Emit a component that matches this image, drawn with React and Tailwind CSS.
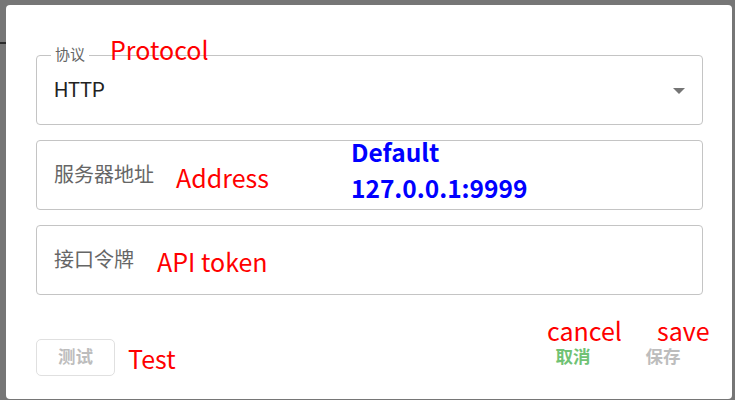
export default function App() {
  const ui = { fontFamily: 'Roboto, "Noto Sans CJK SC", sans-serif' };
  const ann = { fontFamily: '"Noto Sans CJK SC", sans-serif' };
  return (
    <div className="relative h-[400px] w-[735px] overflow-hidden bg-[#767676]" style={ui}>
      <div className="absolute left-0 top-[42px] h-[2px] w-[6px] bg-[#2a2a2a]" />
      <div className="relative ml-[6px] mt-[5px] flex h-[394px] w-[726px] flex-col rounded-[4px] bg-white px-[30px] pt-[50px]">
        {/* Protocol select */}
        <div className="relative flex h-[70px] w-[667px] items-center justify-between rounded-[4px] border border-[#c4c4c4] pl-[17px] pr-[17px]">
          <span className="absolute left-[14px] top-[-11px] bg-white px-[4px] text-[15px] leading-[20px] text-[#666]">协议</span>
          <span className="text-[20px] leading-none text-[#212121]">HTTP</span>
          <svg width="12" height="6" viewBox="0 0 12 6" className="mt-[1px]">
            <path d="M0 0 L12 0 L6 6 Z" fill="#757575" />
          </svg>
        </div>
        {/* Address */}
        <div className="mt-[15px] flex h-[70px] w-[667px] items-center rounded-[4px] border border-[#c4c4c4] pl-[17px]">
          <span className="text-[20px] leading-none text-[#666]">服务器地址</span>
        </div>
        {/* Token */}
        <div className="mt-[15px] flex h-[70px] w-[667px] items-center rounded-[4px] border border-[#c4c4c4] pl-[17px]">
          <span className="text-[20px] leading-none text-[#666]">接口令牌</span>
        </div>
        {/* Buttons */}
        <div className="mt-[44px] flex w-[667px] items-center justify-between">
          <button className="flex h-[37px] w-[79px] items-center justify-center rounded-[5px] border border-[#e0e0e0] text-[17.5px] font-bold text-[#bdbdbd]">测试</button>
          <div className="flex items-center gap-[10px]">
            <button className="flex h-[37px] w-[80px] items-center justify-center text-[17.5px] font-bold text-[#70c274]">取消</button>
            <button className="flex h-[37px] w-[80px] items-center justify-center text-[17.5px] font-bold text-[#bdbdbd]">保存</button>
          </div>
        </div>
      </div>

      {/* Annotations */}
      <div className="absolute left-[110px] top-[37px] text-[25px] leading-none text-[#ff0000]" style={ann}>Protocol</div>
      <div className="absolute left-[176px] top-[165px] text-[25px] leading-none text-[#ff0000]" style={ann}>Address</div>
      <div className="absolute left-[157px] top-[249px] text-[25px] leading-none text-[#ff0000]" style={ann}>API token</div>
      <div className="absolute left-[128px] top-[346px] text-[25px] leading-none text-[#ff0000]" style={ann}>Test</div>
      <div className="absolute left-[547px] top-[318px] text-[25px] leading-none text-[#ff0000]" style={ann}>cancel</div>
      <div className="absolute left-[657px] top-[318px] text-[25px] leading-none text-[#ff0000]" style={ann}>save</div>
      <div className="absolute left-[351px] top-[140px] text-[24.5px] font-bold leading-none text-[#0000ff]" style={ann}>Default</div>
      <div className="absolute left-[351px] top-[176px] text-[24.5px] font-bold leading-none text-[#0000ff]" style={ann}>127.0.0.1:9999</div>
    </div>
  );
}
